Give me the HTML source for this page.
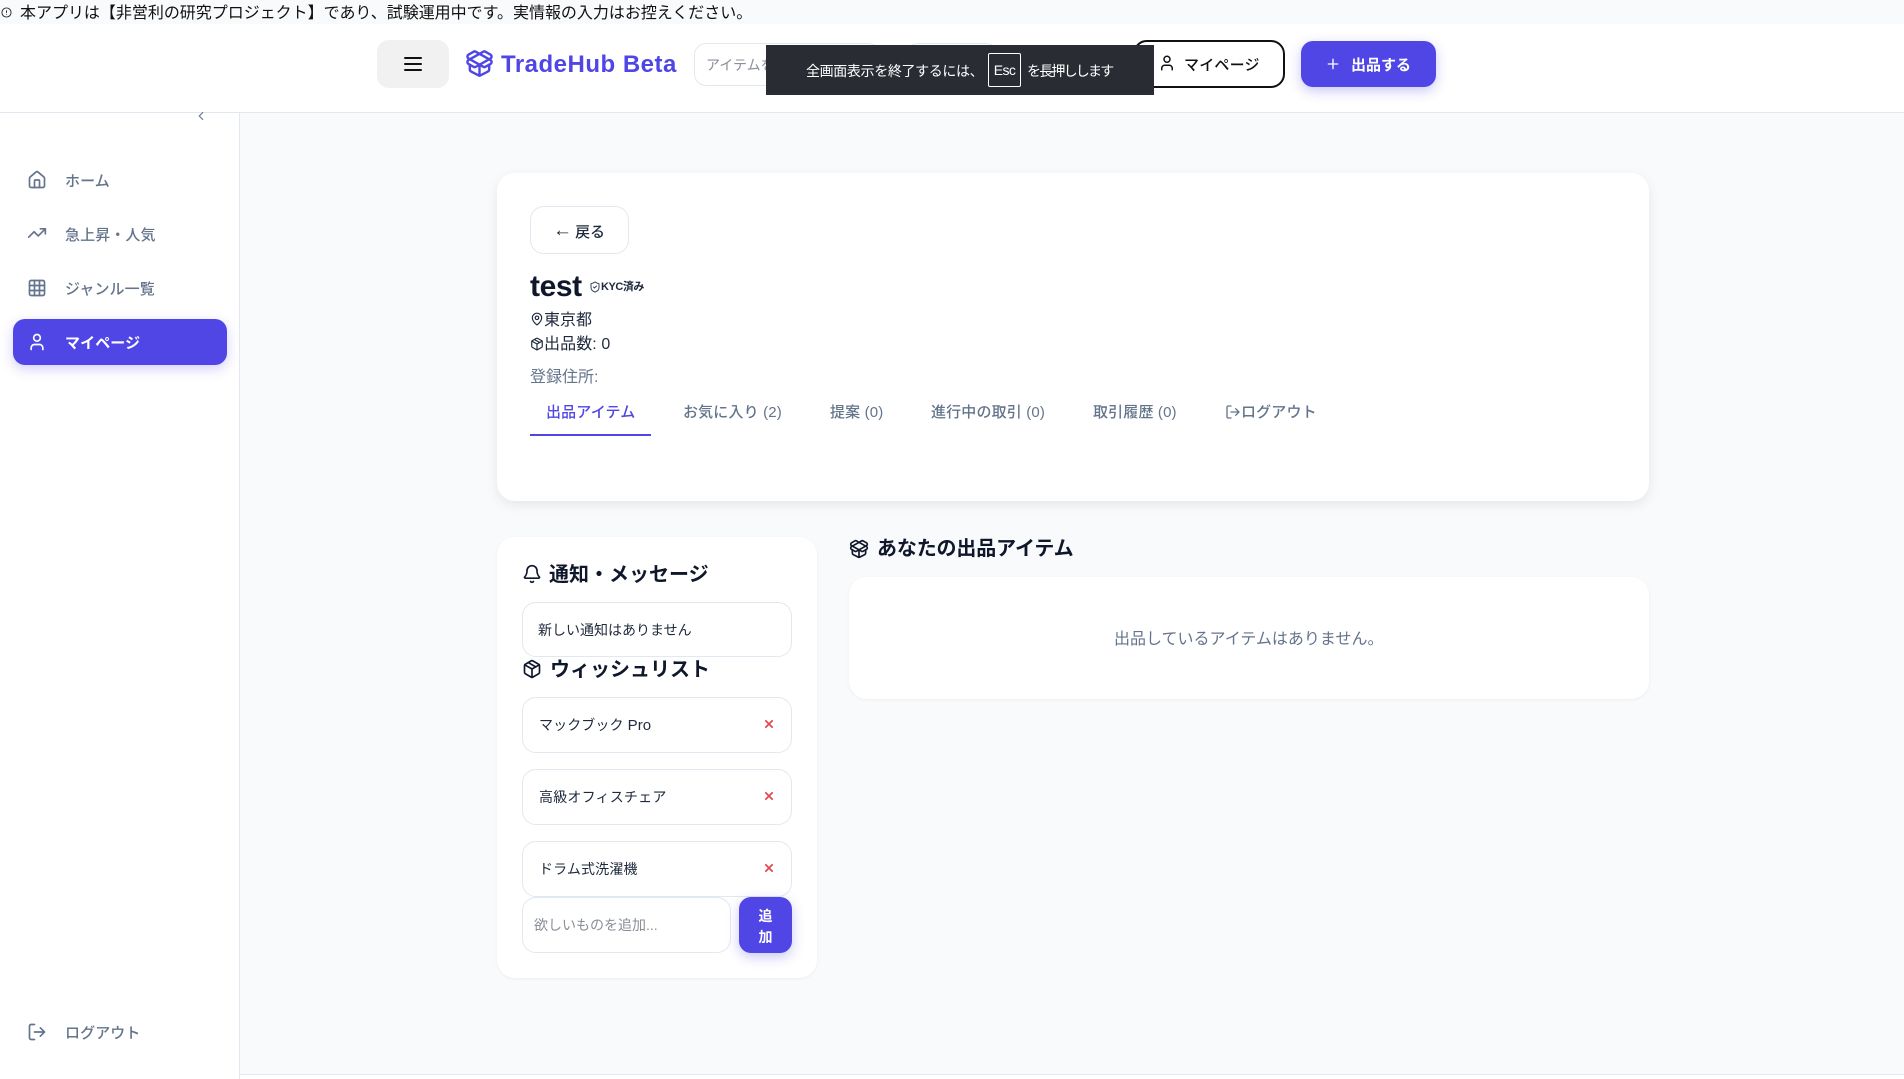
<!DOCTYPE html>
<html lang="ja"><head><meta charset="utf-8"><title>TradeHub Beta</title>
<style>
*{box-sizing:border-box}
html,body{margin:0;padding:0;width:1904px;height:1079px;overflow:hidden;background:#f9fafb;font-family:"Liberation Sans","Noto Sans CJK JP",sans-serif;color:#0f172a}
.a{position:absolute}
.t{position:absolute;white-space:nowrap;height:24px;line-height:24px}
svg.i{position:absolute;fill:none;stroke:currentColor;stroke-width:2;stroke-linecap:round;stroke-linejoin:round}
.box{position:absolute;background:#fff;border:1px solid #e2e8f0;border-radius:14px}
.nav{font-size:15px;font-weight:500;color:#64748b;letter-spacing:.1px}
.tab{font-size:15px;font-weight:500;color:#64748b;letter-spacing:.15px}
.h{font-size:20px;font-weight:700;color:#0f172a}
.x{font-size:14px;color:#1e293b}
.rx{position:absolute;left:765px;width:8px;height:8px}
</style></head><body>
<div class="a" style="left:0;top:0;width:1904px;height:24px;background:#f8fafc"></div>
<svg class="i" style="left:1px;top:7px;color:#222;stroke-width:2" width="11" height="11" viewBox="0 0 24 24"><circle cx="12" cy="12" r="10"/><path d="M12 8v4M12 16h.01"/></svg>
<div class="t" style="left:20px;top:0;height:24px;line-height:28px;font-size:16px;color:#111;letter-spacing:-.02px">本アプリは【非営利の研究プロジェクト】であり、試験運用中です。実情報の入力はお控えください。</div>

<div class="a" style="left:0;top:24px;width:1904px;height:89px;background:#fff;border-bottom:1px solid #e2e8f0"></div>
<div class="a" style="left:377px;top:40px;width:72px;height:48px;background:#f1f1f1;border-radius:12px"></div>
<svg class="i" style="left:401px;top:52px;color:#111" width="24" height="24" viewBox="0 0 24 24"><path d="M4 12h16M4 6h16M4 18h16"/></svg>
<svg class="i" style="left:465px;top:49px;color:#4f46e5" width="29" height="29" viewBox="0 0 24 24"><path d="M12 22v-9"/><path d="M15.17 2.21a1.67 1.67 0 0 1 1.63 0L21 4.57a1.93 1.93 0 0 1 0 3.36L8.82 14.79a1.655 1.655 0 0 1-1.64 0L3 12.43a1.93 1.93 0 0 1 0-3.36z"/><path d="M20 13v3.87a2.06 2.06 0 0 1-1.11 1.83l-6 3.08a1.93 1.93 0 0 1-1.78 0l-6-3.08A2.06 2.06 0 0 1 4 16.87V13"/><path d="M21 12.43a1.93 1.93 0 0 0 0-3.36L8.83 2.2a1.64 1.64 0 0 0-1.63 0L3 4.57a1.93 1.93 0 0 0 0 3.35l12.18 6.86a1.636 1.636 0 0 0 1.63 0z"/></svg>
<div class="t" style="left:501px;top:51px;height:28px;line-height:28px;font-size:24px;font-weight:700;color:#4f46e5;letter-spacing:.5px">TradeHub Beta</div>
<div class="box" style="left:694px;top:43px;width:186px;height:43px;border-radius:12px"></div>
<div class="t" style="left:706px;top:53px;font-size:14px;color:#8a8f98">アイテムを検索</div>
<div class="box" style="left:906px;top:43px;width:92px;height:43px;border-radius:12px"></div>
<div class="box" style="left:1133px;top:40px;width:152px;height:48px;border:2px solid #111;border-radius:14px"></div>
<svg class="i" style="left:1158px;top:54px;color:#111" width="18" height="18" viewBox="0 0 24 24"><path d="M19 21v-2a4 4 0 0 0-4-4H9a4 4 0 0 0-4 4v2"/><circle cx="12" cy="7" r="4"/></svg>
<div class="t" style="left:1184px;top:54px;font-size:15px;font-weight:500;color:#111;letter-spacing:.2px">マイページ</div>
<div class="a" style="left:1301px;top:41px;width:135px;height:46px;background:#4f46e5;border-radius:12px;box-shadow:0 4px 12px rgba(79,70,229,.3)"></div>
<svg class="i" style="left:1325px;top:56px;color:#fff" width="16" height="16" viewBox="0 0 24 24"><path d="M5 12h14M12 5v14"/></svg>
<div class="t" style="left:1351px;top:54px;font-size:15px;font-weight:700;color:#fff">出品する</div>

<div class="a" style="left:766px;top:45px;width:388px;height:50px;background:#292c33"></div>
<div class="t" style="left:806px;top:59px;font-size:14px;color:#fff;letter-spacing:-.36px">全画面表示を終了するには、</div>
<div class="a" style="left:988px;top:53px;width:33px;height:34px;border:1px solid #fff;border-radius:2px;color:#fff;font-size:14px;text-align:center;line-height:32px;letter-spacing:-.6px">Esc</div>
<div class="t" style="left:1027px;top:59px;font-size:14px;color:#fff;letter-spacing:-1.8px">を長押しします</div>

<div class="a" style="left:0;top:113px;width:240px;height:966px;background:#fff;border-right:1px solid #e2e8f0"></div>
<svg class="i" style="left:194px;top:109px;color:#64748b" width="14" height="14" viewBox="0 0 24 24"><path d="m15 18-6-6 6-6"/></svg>

<svg class="i" style="left:27px;top:170px;color:#64748b" width="20" height="20" viewBox="0 0 24 24"><path d="M15 21v-8a1 1 0 0 0-1-1h-4a1 1 0 0 0-1 1v8"/><path d="M3 10a2 2 0 0 1 .709-1.528l7-5.999a2 2 0 0 1 2.582 0l7 5.999A2 2 0 0 1 21 10v9a2 2 0 0 1-2 2H5a2 2 0 0 1-2-2z"/></svg>
<div class="t nav" style="left:65px;top:170px">ホーム</div>
<svg class="i" style="left:27px;top:223px;color:#64748b" width="20" height="20" viewBox="0 0 24 24"><path d="M22 7l-8.500 8.500-5-5L2 17"/><path d="M16 7h6v6"/></svg>
<div class="t nav" style="left:65px;top:224px">急上昇・人気</div>
<svg class="i" style="left:27px;top:278px;color:#64748b" width="20" height="20" viewBox="0 0 24 24"><rect x="3" y="3" width="18" height="18" rx="2"/><path d="M3 9h18M3 15h18M9 3v18M15 3v18"/></svg>
<div class="t nav" style="left:65px;top:278px">ジャンル一覧</div>
<div class="a" style="left:13px;top:319px;width:214px;height:46px;background:#4f46e5;border-radius:12px;box-shadow:0 4px 12px rgba(79,70,229,.25)"></div>
<svg class="i" style="left:27px;top:332px;color:#fff" width="20" height="20" viewBox="0 0 24 24"><path d="M19 21v-2a4 4 0 0 0-4-4H9a4 4 0 0 0-4 4v2"/><circle cx="12" cy="7" r="4"/></svg>
<div class="t" style="left:65px;top:332px;font-size:15px;font-weight:700;color:#fff;letter-spacing:.1px">マイページ</div>
<svg class="i" style="left:27px;top:1022px;color:#64748b" width="20" height="20" viewBox="0 0 24 24"><path d="M9 21H5a2 2 0 0 1-2-2V5a2 2 0 0 1 2-2h4"/><path d="m16 17 5-5-5-5M21 12H9"/></svg>
<div class="t nav" style="left:65px;top:1022px">ログアウト</div>
<div class="a" style="left:240px;top:1074px;width:1664px;height:5px;background:#fff;border-top:1px solid #e2e8f0"></div>

<div class="a" style="left:497px;top:173px;width:1152px;height:328px;background:#fff;border-radius:18px;box-shadow:0 4px 12px rgba(0,0,0,.08)"></div>
<div class="box" style="left:530px;top:206px;width:99px;height:48px"></div>
<div class="t" style="left:553px;top:221px;font-size:15px;font-weight:500;color:#1e293b;letter-spacing:-.1px"><span style="font-size:19px;line-height:15px;position:relative;top:-1px;letter-spacing:-1px">←</span> 戻る</div>
<div class="t" style="left:530px;top:269px;height:36px;line-height:36px;font-size:30px;font-weight:700;color:#0f172a;letter-spacing:-.4px">test</div>
<svg class="i" style="left:589px;top:281px;color:#334155" width="12" height="12" viewBox="0 0 24 24"><path d="M20 13c0 5-3.500 7.500-7.660 8.950a1 1 0 0 1-.67-.01C7.500 20.500 4 18 4 13V6a1 1 0 0 1 1-1c2 0 4.500-1.200 6.240-2.720a1.170 1.170 0 0 1 1.520 0C14.510 3.810 17 5 19 5a1 1 0 0 1 1 1z"/><path d="m9 12 2 2 4-4"/></svg>
<div class="t" style="left:601px;top:275px;font-size:11px;font-weight:700;color:#1e293b;letter-spacing:-.45px">KYC済み</div>
<svg class="i" style="left:530px;top:312px;color:#1e293b" width="14" height="14" viewBox="0 0 24 24"><path d="M20 10c0 4.993-5.539 10.193-7.399 11.799a1 1 0 0 1-1.202 0C9.539 20.193 4 14.993 4 10a8 8 0 0 1 16 0"/><circle cx="12" cy="10" r="3"/></svg>
<div class="t" style="left:544px;top:309px;font-size:16px;color:#1e293b">東京都</div>
<svg class="i" style="left:530px;top:337px;color:#1e293b" width="14" height="14" viewBox="0 0 24 24"><path d="M11 21.730a2 2 0 0 0 2 0l7-4A2 2 0 0 0 21 16V8a2 2 0 0 0-1-1.730l-7-4a2 2 0 0 0-2 0l-7 4A2 2 0 0 0 3 8v8a2 2 0 0 0 1 1.730z"/><path d="M12 22V12"/><path d="m3.300 7 8.700 5 8.700-5"/><path d="m7.500 4.270 9 5.150"/></svg>
<div class="t" style="left:544px;top:333px;font-size:16px;color:#1e293b;letter-spacing:.1px">出品数: 0</div>
<div class="t" style="left:530px;top:366px;font-size:16px;color:#64748b">登録住所:</div>
<div class="t tab" style="left:546px;top:401px;color:#4f46e5;font-weight:500">出品アイテム</div>
<div class="a" style="left:530px;top:434px;width:121px;height:2px;background:#4f46e5"></div>
<div class="t tab" style="left:683px;top:401px">お気に入り (2)</div>
<div class="t tab" style="left:830px;top:401px">提案 (0)</div>
<div class="t tab" style="left:931px;top:401px">進行中の取引 (0)</div>
<div class="t tab" style="left:1093px;top:401px">取引履歴 (0)</div>
<svg class="i" style="left:1225px;top:404px;color:#64748b" width="16" height="16" viewBox="0 0 24 24"><path d="M9 21H5a2 2 0 0 1-2-2V5a2 2 0 0 1 2-2h4"/><path d="m16 17 5-5-5-5M21 12H9"/></svg>
<div class="t tab" style="left:1241px;top:401px">ログアウト</div>

<div class="a" style="left:497px;top:537px;width:320px;height:441px;background:#fff;border-radius:18px;box-shadow:0 1px 3px rgba(0,0,0,.05)"></div>
<svg class="i" style="left:522px;top:564px;color:#0f172a" width="20" height="20" viewBox="0 0 24 24"><path d="M10.268 21a2 2 0 0 0 3.464 0"/><path d="M3.262 15.326A1 1 0 0 0 4 17h16a1 1 0 0 0 .74-1.673C19.410 13.956 18 12.499 18 8A6 6 0 0 0 6 8c0 4.499-1.411 5.956-2.738 7.326"/></svg>
<div class="t h" style="left:549px;top:561px;height:24px;line-height:28px">通知・メッセージ</div>
<div class="box" style="left:522px;top:602px;width:270px;height:55px"></div>
<div class="t x" style="left:538px;top:618px">新しい通知はありません</div>
<svg class="i" style="left:522px;top:659px;color:#0f172a" width="20" height="20" viewBox="0 0 24 24"><path d="M11 21.730a2 2 0 0 0 2 0l7-4A2 2 0 0 0 21 16V8a2 2 0 0 0-1-1.730l-7-4a2 2 0 0 0-2 0l-7 4A2 2 0 0 0 3 8v8a2 2 0 0 0 1 1.730z"/><path d="M12 22V12"/><path d="m3.300 7 8.700 5 8.700-5"/><path d="m7.500 4.270 9 5.150"/></svg>
<div class="t h" style="left:550px;top:658px">ウィッシュリスト</div>
<div class="box" style="left:522px;top:697px;width:270px;height:56px"></div>
<div class="t x" style="left:539px;top:713px;letter-spacing:.1px">マックブック <span style="font-size:15px">Pro</span></div>
<svg class="rx" style="top:720px" viewBox="0 0 9 9"><path d="M1 1l7 7M8 1L1 8" stroke="#e5484d" stroke-width="2" stroke-linecap="round" fill="none"/></svg>
<div class="box" style="left:522px;top:769px;width:270px;height:56px"></div>
<div class="t x" style="left:539px;top:785px;letter-spacing:.2px">高級オフィスチェア</div>
<svg class="rx" style="top:792px" viewBox="0 0 9 9"><path d="M1 1l7 7M8 1L1 8" stroke="#e5484d" stroke-width="2" stroke-linecap="round" fill="none"/></svg>
<div class="box" style="left:522px;top:841px;width:270px;height:56px"></div>
<div class="t x" style="left:539px;top:857px;letter-spacing:.15px">ドラム式洗濯機</div>
<svg class="rx" style="top:864px" viewBox="0 0 9 9"><path d="M1 1l7 7M8 1L1 8" stroke="#e5484d" stroke-width="2" stroke-linecap="round" fill="none"/></svg>
<div class="box" style="left:522px;top:897px;width:209px;height:56px"></div>
<div class="t" style="left:534px;top:913px;font-size:14px;color:#8a8f98">欲しいものを追加...</div>
<div class="a" style="left:739px;top:897px;width:53px;height:56px;background:#4f46e5;border-radius:12px;box-shadow:0 4px 12px rgba(79,70,229,.3);color:#fff;font-size:14px;font-weight:700;text-align:center;line-height:21px;padding-top:9px">追<br>加</div>

<svg class="i" style="left:849px;top:539px;color:#0f172a" width="20" height="20" viewBox="0 0 24 24"><path d="M12 22v-9"/><path d="M15.170 2.210a1.670 1.670 0 0 1 1.630 0L21 4.570a1.930 1.930 0 0 1 0 3.360L8.820 14.790a1.655 1.655 0 0 1-1.640 0L3 12.430a1.930 1.930 0 0 1 0-3.360z"/><path d="M20 13v3.870a2.060 2.060 0 0 1-1.110 1.830l-6 3.080a1.930 1.930 0 0 1-1.780 0l-6-3.080A2.060 2.060 0 0 1 4 16.870V13"/><path d="M21 12.430a1.930 1.930 0 0 0 0-3.360L8.830 2.200a1.640 1.640 0 0 0-1.630 0L3 4.570a1.930 1.930 0 0 0 0 3.350l12.180 6.860a1.636 1.636 0 0 0 1.630 0z"/></svg>
<div class="t h" style="left:877px;top:537px;letter-spacing:-.15px">あなたの出品アイテム</div>
<div class="a" style="left:849px;top:577px;width:800px;height:122px;background:#fff;border-radius:18px;box-shadow:0 1px 3px rgba(0,0,0,.05)"></div>
<div class="t" style="left:1114px;top:626px;height:24px;line-height:28px;font-size:16px;color:#64748b">出品しているアイテムはありません。</div>
</body></html>
